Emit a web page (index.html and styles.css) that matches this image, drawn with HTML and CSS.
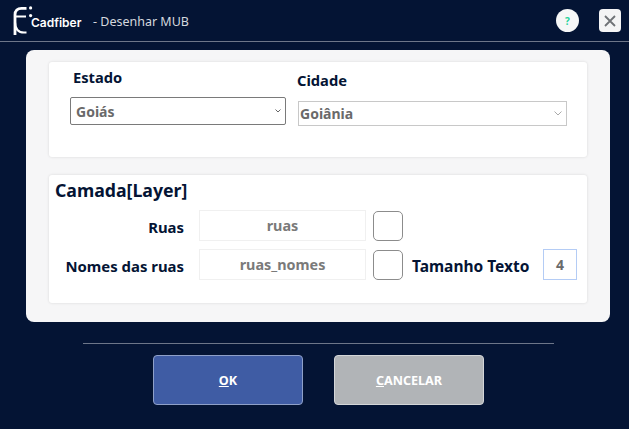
FILE: index.html
```html
<!DOCTYPE html>
<html lang="pt">
<head>
<meta charset="utf-8">
<title>Cadfiber - Desenhar MUB</title>
<link rel="stylesheet" href="styles.css">
</head>
<body>
<div class="window">
  <header class="header">
    <svg class="logo" width="20" height="30" viewBox="0 0 20 30" aria-hidden="true">
      <path d="M13.500 2.300H8.500C4.500 2.300 2 4.800 2 8.800V29" fill="none" stroke="#fff" stroke-width="2.800"/>
      <path d="M2 10.500H13M2 16.500C2 23 5.500 26.500 11 26.500H13.500" fill="none" stroke="#fff" stroke-width="2.200"/>
      <circle cx="17.600" cy="1.900" r="1.600" fill="#fff"/>
      <circle cx="17.600" cy="9.600" r="1.600" fill="#fff"/>
    </svg>
    <span class="brand">Cadfiber</span>
    <span class="title">- Desenhar MUB</span>
    <span class="help">?</span>
    <span class="close">
      <svg width="12" height="12" viewBox="0 0 12 12" aria-hidden="true"><path d="M1 1L11 11M11 1L1 11" stroke="#6f7276" stroke-width="1.800" fill="none"/></svg>
    </span>
  </header>

  <main class="panel">
    <section class="card card-location">
      <div class="field field-state">
        <label class="label label-state">Estado</label>
        <div class="select select-state"><span>Goiás</span>
          <svg class="chev" width="6" height="4" viewBox="0 0 6 4" aria-hidden="true"><path d="M0.500 0.500L3 3L5.500 0.500" fill="none" stroke="#666" stroke-width="1"/></svg>
        </div>
      </div>
      <div class="field field-city">
        <label class="label label-city">Cidade</label>
        <div class="select select-city"><span>Goiânia</span>
          <svg class="chev" width="8" height="5" viewBox="0 0 8 5" aria-hidden="true"><path d="M0.500 0.500L4 4L7.500 0.500" fill="none" stroke="#aaa" stroke-width="1"/></svg>
        </div>
      </div>
    </section>

    <section class="card card-layer">
      <h2 class="layer-title">Camada[Layer]</h2>
      <div class="row">
        <label class="row-label">Ruas</label>
        <div class="input">ruas</div>
        <div class="swatch"></div>
      </div>
      <div class="row">
        <label class="row-label">Nomes das ruas</label>
        <div class="input">ruas_nomes</div>
        <div class="swatch"></div>
        <label class="size-label">Tamanho Texto</label>
        <div class="size-input">4</div>
      </div>
    </section>
  </main>

  <footer class="footer">
    <div class="divider"></div>
    <div class="actions">
      <button class="btn btn-ok"><u>O</u>K</button>
      <button class="btn btn-cancel"><u>C</u>ANCELAR</button>
    </div>
  </footer>
</div>
</body>
</html>
```

FILE: styles.css
```css
* { box-sizing: border-box; }
html, body { margin: 0; padding: 0; }
body {
  width: 629px;
  height: 429px;
  overflow: hidden;
  background: #041434;
  font-family: "Noto Sans", "Open Sans", sans-serif;
}
.window { display: flex; flex-direction: column; height: 429px; }

.header {
  height: 42px;
  display: flex;
  align-items: center;
  padding: 0 8px 0 13px;
  border-bottom: 1px solid #6d7689;
  flex: none;
}
.logo { flex: none; margin-top: 1px; }
.brand {
  margin-left: -2px;
  margin-top: 4px;
  width: 52px;
  font-family: "Inter", sans-serif;
  font-size: 12px;
  font-weight: 600;
  white-space: nowrap;
  color: #fff;
}
.title { margin-left: 10px; margin-top: 1px; font-size: 12.500px; color: #d5d8de; }
.help {
  margin-left: auto;
  width: 23px;
  height: 23px;
  border-radius: 50%;
  background: #f6f7f7;
  color: #1fd39a;
  font-size: 10px;
  font-weight: 700;
  display: flex;
  align-items: center;
  justify-content: center;
}
.close {
  margin-left: 20px;
  width: 22px;
  height: 23px;
  border-radius: 4px;
  background: #f4f4f5;
  display: flex;
  align-items: center;
  justify-content: center;
}

.panel {
  margin: 8px 19px 0 26px;
  height: 272px;
  background: #f6f6f7;
  border-radius: 8px;
  padding: 12px 23px 0;
  flex: none;
}
.card {
  background: #fff;
  border-radius: 3px;
  box-shadow: 0 0 3px rgba(0, 0, 0, 0.12);
}
.card-location {
  height: 95px;
  display: flex;
  padding-left: 21px;
}
.field { display: flex; flex-direction: column; }
.field-state { width: 216px; }
.field-city { width: 269px; margin-left: 12px; }
.label { font-size: 14.700px; font-weight: 700; color: #041434; line-height: 20px; }
.label-state { margin: 5px 0 0 3px; padding-bottom: 1px; }
.label-city { margin: 8px 0 0 -1px; padding-bottom: 1px; }
.select {
  display: flex;
  align-items: center;
  justify-content: space-between;
  background: #fff;
  color: #6a6a6a;
  font-size: 14px;
  font-weight: 700;
}
.select-state {
  margin-top: 9px;
  height: 28px;
  border: 1px solid #7a7a7a;
  border-radius: 2px;
  padding: 0 4px 0 5px;
}
.select-city {
  margin-top: 10px;
  height: 25px;
  border: 1px solid #c8c8c8;
  padding: 0 4px 0 1px;
}

.card-layer {
  margin-top: 18px;
  height: 128px;
  padding: 4px 0 0 6px;
}
.layer-title {
  margin: 0;
  font-size: 17.700px;
  font-weight: 700;
  line-height: 22px;
  color: #041434;
}
.row {
  display: flex;
  align-items: center;
  height: 31px;
  margin-top: 8px;
}
.card-layer .layer-title + .row { margin-top: 9px; }
.row-label {
  width: 129px;
  padding-top: 2px;
  text-align: right;
  font-size: 14.900px;
  font-weight: 700;
  color: #041434;
}
.input {
  margin-left: 15px;
  width: 167px;
  height: 31px;
  border: 1px solid #f0f0f0;
  color: #7a7a7a;
  font-size: 14.400px;
  font-weight: 700;
  display: flex;
  align-items: center;
  justify-content: center;
}
.swatch {
  margin-left: 7px;
  width: 30px;
  height: 30px;
  border: 1px solid #8c8c8c;
  border-radius: 5px;
  background: #fff;
}
.size-label {
  margin-left: 9px;
  padding-top: 2px;
  width: 131px;
  font-size: 15.500px;
  font-weight: 700;
  white-space: nowrap;
  color: #041434;
}
.size-input {
  width: 34px;
  height: 31px;
  border: 1px solid #b4ccf5;
  color: #6a6a6a;
  font-size: 14px;
  font-weight: 700;
  display: flex;
  align-items: center;
  justify-content: center;
}

.footer { flex: none; }
.divider {
  margin: 21px 75px 0 83px;
  height: 1px;
  background: #6d7689;
}
.actions {
  display: flex;
  gap: 31px;
  margin: 11px 0 0 153px;
}
.btn {
  width: 150px;
  height: 50px;
  border-radius: 4px;
  font-family: inherit;
  font-size: 12.600px;
  font-weight: 700;
  color: #fff;
  padding: 0;
}
.btn-ok { background: #3f5ca4; border: 1px solid #8fa0c8; }
.btn-cancel { background: #b1b4b7; border: 1px solid #d4d6d8; }
```
